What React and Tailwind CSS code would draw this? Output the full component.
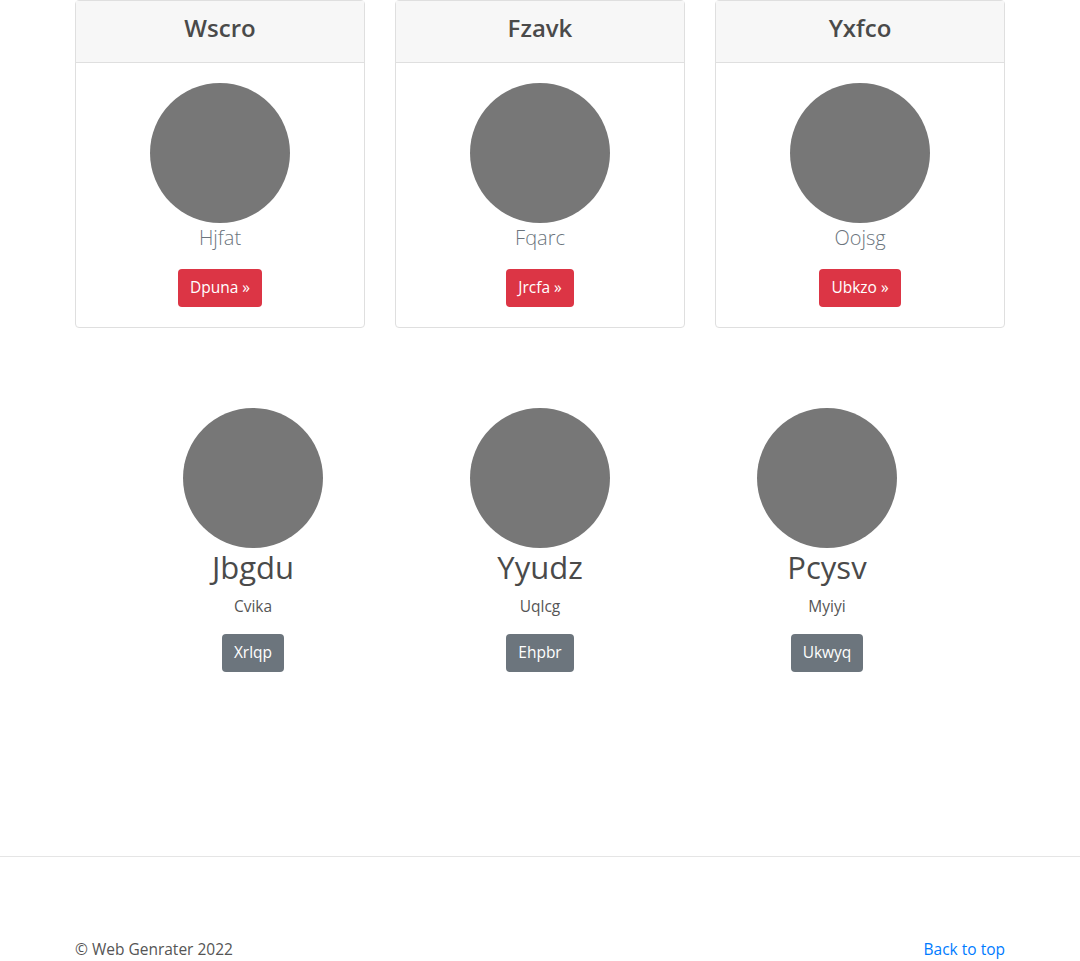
export default function App() {
  const cards = [
    { title: 'Wscro', name: 'Hjfat', action: 'Dpuna' },
    { title: 'Fzavk', name: 'Fqarc', action: 'Jrcfa' },
    { title: 'Yxfco', name: 'Oojsg', action: 'Ubkzo' },
  ];
  const people = [
    { name: 'Jbgdu', sub: 'Cvika', action: 'Xrlqp' },
    { name: 'Yyudz', sub: 'Uqlcg', action: 'Ehpbr' },
    { name: 'Pcysv', sub: 'Myiyi', action: 'Ukwyq' },
  ];

  return (
    <div className="bg-white text-[#212529]" style={{ fontFamily: '"Open Sans", "Noto Sans", sans-serif' }}>
      <div className="mx-auto w-[930px]">
        <div className="grid grid-cols-3 gap-[30px]">
          {cards.map((card) => (
            <div key={card.title} className="rounded-[4px] border border-[#dfdfdf] bg-white">
              <div className="flex h-[62px] items-center justify-center border-b border-[#dfdfdf] bg-[#f7f7f7] pb-[8px]">
                <h4 className="text-[24px] font-semibold leading-none text-[#4a4a4a]">{card.title}</h4>
              </div>
              <div className="flex flex-col items-center p-5">
                <div className="h-[140px] w-[140px] rounded-full bg-[#777777]" />
                <p className="mb-4 text-[20px] font-light leading-[30px] text-[#6c757d]">{card.name}</p>
                <button className="h-[38px] rounded-[4px] bg-[#dc3545] px-3 text-[15.5px] text-white">
                  {card.action} »
                </button>
              </div>
            </div>
          ))}
        </div>

        <div className="mx-auto mt-[80px] grid w-[861px] grid-cols-3">
          {people.map((p) => (
            <div key={p.name} className="flex flex-col items-center text-center">
              <div className="h-[140px] w-[140px] rounded-full bg-[#777777]" />
              <h2 className="mb-2 text-[31px] leading-[38px] text-[#4a4a4a]">{p.name}</h2>
              <p className="mb-4 text-[15.5px] leading-6 text-[#555]">{p.sub}</p>
              <button className="h-[38px] rounded-[4px] bg-[#6c757d] px-3 text-[15.5px] text-white">{p.action}</button>
            </div>
          ))}
        </div>
      </div>

      <div className="mt-[184px] border-t border-[#e5e5e5]" />

      <footer className="mx-auto flex w-[930px] items-center justify-between pb-12 pt-[80px] text-[15.5px] leading-6">
        <p className="text-[#555]">© Web Genrater 2022</p>
        <a href="#" className="text-[#007bff]">Back to top</a>
      </footer>
    </div>
  );
}
